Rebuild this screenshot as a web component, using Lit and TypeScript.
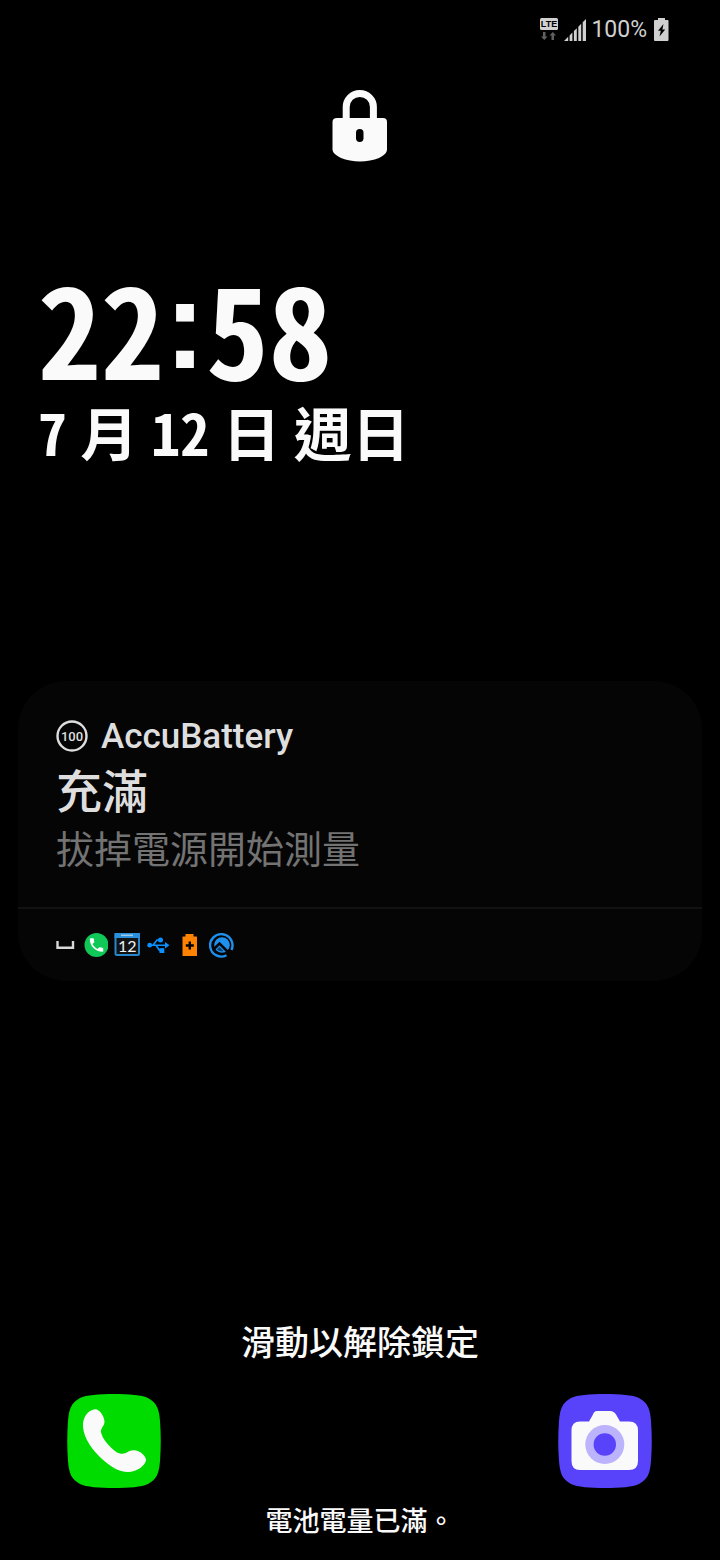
import { LitElement, html, css, svg } from "lit";
import { customElement, property } from "lit/decorators.js";

const SQUIRCLE =
  "M47 0C62 0 75 1 81 4C90 9 92 15 93 27C94 40 94 54 93 67C92 79 90 85 81 90C75 93 62 94 47 94C32 94 19 93 13 90C4 85 2 79 1 67C0 54 0 40 1 27C2 15 4 9 13 4C19 1 32 0 47 0Z";

@customElement("status-bar")
export class StatusBar extends LitElement {
  @property() level = "100%";

  static styles = css`
    :host {
      display: flex;
      justify-content: flex-end;
      align-items: center;
      height: 60px;
      padding-right: 51px;
      color: #d0d0d0;
    }
    svg {
      display: block;
    }
    .signal {
      margin-left: 5px;
    }
    .level {
      margin: 0 7px 0 5px;
      font: 400 23px/28px Roboto, sans-serif;
    }
    .lte {
      font: 700 9px "Liberation Sans", sans-serif;
    }
  `;

  render() {
    return html`
      <svg width="20" height="24" viewBox="0 0 20 24" role="img" aria-label="LTE">
        <rect x="1" y="0" width="18" height="12" rx="1.500" fill="#d0d0d0" />
        <text class="lte" x="10" y="9.400" text-anchor="middle" fill="#000">LTE</text>
        <path d="M4 14h2.500v4.500h2L5.300 22L2 18.500h2z M12.500 22v-4.500h-2l3.300-3.500L17 17.500h-2V22z" fill="#606060" />
      </svg>
      <svg class="signal" width="22" height="22" viewBox="0 0 22 22" role="img" aria-label="Signal">
        <path
          d="M0 22L4.200 17.800V22z M5.600 16.500L8.400 13.500V22H5.600z M9.900 12L12.800 9.200V22H9.900z M14.300 7.700L17.200 4.800V22H14.300z M18.700 3.300L22 0V22H18.700z"
          fill="#d0d0d0"
        />
      </svg>
      <span class="level">${this.level}</span>
      <svg width="15" height="24" viewBox="0 0 15 24" role="img" aria-label="Charging">
        <path
          d="M4 0h7v2h2.500q1 0 1 1v19q0 1-1 1H1q-1 0-1-1V3q0-1 1-1h3z M9.500 6L4 12.800h2.800L5.500 18.500L11.200 11.500H8.400z"
          fill="#d0d0d0"
          fill-rule="evenodd"
        />
      </svg>
    `;
  }
}

@customElement("lock-clock")
export class LockClock extends LitElement {
  @property() hours = "22";
  @property() minutes = "58";

  static styles = css`
    :host {
      display: block;
      color: #fafafa;
      font-family: "Noto Sans CJK TC", sans-serif;
      font-weight: 700;
    }
    .time {
      display: flex;
      align-items: center;
      font-size: 126px;
      line-height: 122px;
    }
    .date {
      display: block;
      margin-top: 11px;
      font-size: 58px;
      line-height: 68px;
      white-space: nowrap;
    }
    .num {
      font-family: "Noto Sans Mono CJK TC", "Noto Sans CJK TC", sans-serif;
    }
    .colon {
      font-family: "Liberation Sans", sans-serif;
    }
  `;

  render() {
    return html`
      <time class="time"
        ><span class="num">${this.hours}</span><span class="colon">:</span><span class="num">${this.minutes}</span></time
      >
      <time class="date"><span class="num">7</span> 月 <span class="num">12</span> 日 週日</time>
    `;
  }
}

@customElement("notification-card")
export class NotificationCard extends LitElement {
  static styles = css`
    :host {
      display: block;
      border-radius: 48px;
      background: #050505;
      font-family: "Noto Sans CJK TC", sans-serif;
    }
    .body {
      padding: 34px 38px 30px;
      border-bottom: 2px solid #121212;
    }
    .app {
      display: flex;
      align-items: center;
      gap: 13px;
      color: #dedede;
      font: 500 35px/44px Roboto, sans-serif;
    }
    h2,
    p {
      margin: 0;
    }
    h2 {
      color: #dedede;
      font-size: 46px;
      font-weight: 500;
      line-height: 58px;
    }
    p {
      color: #737373;
      font-size: 38px;
      line-height: 60px;
    }
    .tray {
      display: flex;
      align-items: center;
      gap: 6px;
      height: 72px;
      padding: 0 38px;
    }
    svg {
      display: block;
    }
    .badge {
      font: 500 13px Roboto, sans-serif;
    }
    .day {
      font: 400 16px Lato, sans-serif;
    }
  `;

  render() {
    return html`
      <div class="body">
        <div class="app">
          <svg width="32" height="34" viewBox="0 0 32 34" aria-hidden="true">
            <circle cx="16" cy="16" r="14.500" fill="none" stroke="#dedede" stroke-width="2.400" />
            <text class="badge" x="16" y="20.500" text-anchor="middle" fill="#dedede">100</text>
          </svg>
          <span>AccuBattery</span>
        </div>
        <h2>充滿</h2>
        <p>拔掉電源開始測量</p>
      </div>
      <div class="tray">
        <svg width="21" height="26" viewBox="0 0 21 26">
          <path d="M1.500 9v6.700h15.500V9" fill="none" stroke="#d8d8d8" stroke-width="2.400" />
        </svg>
        <svg width="25" height="26" viewBox="0 0 25 26">
          <circle cx="13.500" cy="13" r="12" fill="#0fc858" />
          <path
            transform="translate(4.500 4) scale(.75)"
            d="M6.620 10.790c1.440 2.830 3.760 5.140 6.590 6.590l2.200-2.200c.27-.27.67-.36 1.020-.24 1.120.37 2.330.57 3.570.57.55 0 1 .45 1 1V20c0 .55-.45 1-1 1-9.390 0-17-7.610-17-17 0-.55.45-1 1-1h3.500c.55 0 1 .45 1 1 0 1.250.2 2.450.57 3.570.11.35.03.74-.25 1.020z"
            fill="#fff"
          />
        </svg>
        <svg width="27" height="26" viewBox="0 0 27 26">
          <rect x="1.500" y="2" width="23.500" height="21" rx="1.500" fill="#101214" stroke="#2a86cc" stroke-width="2" />
          <path d="M.5 1h25.500v5H.5z" fill="#2a90dc" />
          <path d="M7 3.300h12" stroke="#9ccbee" stroke-width="1.500" />
          <text class="day" x="13.200" y="20" text-anchor="middle" fill="#f4f4f4">12</text>
        </svg>
        <svg width="24" height="26" viewBox="0 0 24 26">
          <g fill="none" stroke="#0d90ff" stroke-width="1.600">
            <path d="M3 13.200H19M6 13.200L10 8H13M9 13.200L12.500 18.500H15" />
          </g>
          <path d="M18 10L22.500 13.200L18 16.500z" fill="#0d90ff" />
          <circle cx="2.700" cy="13.200" r="2.400" fill="#0d90ff" />
          <circle cx="13.500" cy="8" r="2.500" fill="#0d90ff" />
          <rect x="12.500" y="16.200" width="4.800" height="4.800" fill="#0d90ff" />
        </svg>
        <svg width="26" height="26" viewBox="0 0 26 26">
          <path
            d="M8.500 2h8v2.500h3q.5 0 .5 .5v18.500q0 .5-.5 .5H6q-.5 0-.5-.5V5q0-.5 .5-.5h2.500z"
            fill="#ff8200"
          />
          <path d="M12.800 9.500v8M8.800 13.500h8" stroke="#000" stroke-width="2.400" />
        </svg>
        <svg width="26" height="26" viewBox="0 0 26 26">
          <path d="M17.500 23.300A11.200 11.200 0 1 1 22.500 18" fill="none" stroke="#1e90ee" stroke-width="2.400" />
          <circle cx="13" cy="13" r="7.800" fill="#1e90ee" />
          <path d="M5.500 16.500L10.500 11.500L20.500 21.500" fill="none" stroke="#050505" stroke-width="2.600" />
          <path d="M8 17.500L10.500 15L14.500 19Q10.500 20 8 17.500z" fill="#0b3f6c" />
        </svg>
      </div>
    `;
  }
}

@customElement("app-root")
export class AppRoot extends LitElement {
  static styles = css`
    :host {
      display: flex;
      flex-direction: column;
      box-sizing: border-box;
      min-height: 100vh;
      background: #000;
      color: #fafafa;
      font-family: "Noto Sans CJK TC", sans-serif;
    }
    svg {
      display: block;
    }
    .lock {
      align-self: center;
      margin-top: 29px;
    }
    lock-clock {
      margin: 101px 38px 0;
    }
    notification-card {
      margin: 216px 18px 0;
    }
    footer {
      margin-top: auto;
      padding-bottom: 20px;
      text-align: center;
      font-weight: 500;
    }
    .hint,
    .charge {
      margin: 0;
    }
    .hint {
      font-size: 34px;
      line-height: 48px;
    }
    .charge {
      font-size: 27px;
      line-height: 40px;
    }
    .shortcuts {
      display: flex;
      justify-content: space-between;
      padding: 29px 68px 12px 67px;
    }
    button {
      padding: 0;
      border: 0;
      background: none;
    }
  `;

  private phone = svg`
    <path d=${SQUIRCLE} fill="#00db00" />
    <path
      d="M28 15.300C32 14.700 37.500 22 37.500 28C37 33 33 34 34.200 39C35.500 45 43 53.500 50 58.500C59 62.500 60 56 67 56.300C73 56.500 79 62 79 66C78.500 71 71 77.500 62 78C53 78.500 44 73 35 65C26 57 17 45 16 33C15.500 24 20 16.500 28 15.300Z"
      fill="#fafafa"
    />`;

  private camera = svg`
    <path d=${SQUIRCLE} fill="#5843fa" />
    <path
      d="M39 17H52Q56 17 58 20.500L62 27.500H71Q80 27.500 80 36.500V67Q80 76 71 76H22Q13.500 76 13.500 67V36.500Q13.500 27.500 22 27.500H31L35 20.500Q36 17 39 17Z"
      fill="#fafafa"
    />
    <circle cx="46.800" cy="50.500" r="19.500" fill="#bcb3fd" />
    <circle cx="46.800" cy="50.500" r="11.200" fill="#5843fa" />`;

  render() {
    return html`
      <status-bar></status-bar>
      <svg class="lock" width="56" height="74" viewBox="0 0 56 74" role="img" aria-label="Locked">
        <path d="M14.200 34V18A13.600 13.600 0 0 1 41.400 18V34" fill="none" stroke="#fafafa" stroke-width="7" />
        <path
          d="M5 29H51Q55 29 55 33V60C55 64 52 66.500 47 69C36 73.500 20 73.500 9 69C4 66.500 .5 64 .5 60V33Q.5 29 5 29Z"
          fill="#fafafa"
        />
        <rect x="24" y="40" width="7.500" height="13" rx="3.700" fill="#000" />
      </svg>
      <lock-clock></lock-clock>
      <notification-card></notification-card>
      <footer>
        <p class="hint">滑動以解除鎖定</p>
        <div class="shortcuts">
          <button aria-label="Phone">
            <svg width="94" height="94" viewBox="0 0 94 94">${this.phone}</svg>
          </button>
          <button aria-label="Camera">
            <svg width="94" height="94" viewBox="0 0 94 94">${this.camera}</svg>
          </button>
        </div>
        <p class="charge">電池電量已滿。</p>
      </footer>
    `;
  }
}
